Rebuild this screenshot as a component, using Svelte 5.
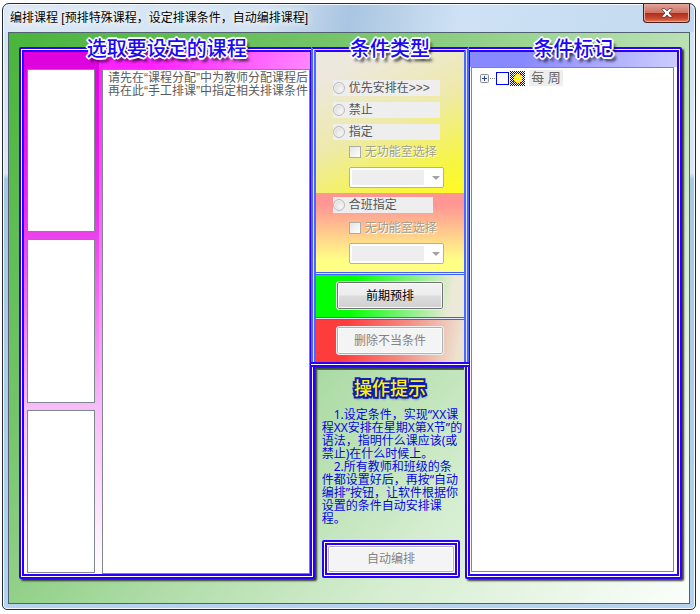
<script>
	let slots = [
		'课程列表',
		'教师列表',
		'班级列表'
	]

	let kinds = [
		'优先安排在>>>',
		'禁止',
		'指定'
	]

	let kind = $state('');
	let open = $state(false);

	const notice = '请先在“课程分配”中为教师分配课程后\n再在此“手工排课”中指定相关排课条件';

	const hints = [
		'　1.设定条件，实现“XX课',
		'程XX安排在星期X第X节”的',
		'语法，指明什么课应该(或',
		'禁止)在什么时候上。',
		'　2.所有教师和班级的条',
		'件都设置好后，再按“自动',
		'编排”按钮，让软件根据你',
		'设置的条件自动安排课',
		'程。'
	].join('\n');
</script>

{#snippet room()}
	<label class="check"><input type="checkbox" disabled /><span>无功能室选择</span></label>
	<div class="combo">
		<select disabled aria-label="功能室"><option></option></select>
		<svg viewBox="0 0 8 4" width="8" height="4"><path d="M0 0h8L4 4z" fill="#a3a3a3" /></svg>
	</div>
{/snippet}

<main class="window">
	<header>
		<h1>编排课程 [预排特殊课程，设定排课条件，自动编排课程]</h1>
		<button class="close" aria-label="关闭">
			<svg viewBox="0 0 12 10" width="12" height="10">
				<path d="M1 .7h3L6 3l2-2.300h3v1L8 5l3 3.300v1H8L6 7 4 9.300H1v-1L4 5 1 1.700z" fill="#fff" stroke="#54343a" stroke-width=".8" />
			</svg>
		</button>
	</header>

	<div class="client">
		<section class="panel courses">
			<h2>选取要设定的课程</h2>
			<div class="slots">
				{#each slots as slot}
					<div class="slot" aria-label={slot} role="listbox" tabindex="-1"></div>
				{/each}
			</div>
			<div class="list">
				<p>{notice}</p>
			</div>
		</section>

		<div class="middle">
			<section class="types">
				<h2>条件类型</h2>
				<div class="group single">
					{#each kinds as k}
						<label class="kind"><input type="radio" name="kind" value={k} bind:group={kind} disabled /><span>{k}</span></label>
					{/each}
					{@render room()}
				</div>
				<div class="group merged">
					<label class="kind short"><input type="radio" name="kind" value="合班指定" bind:group={kind} disabled /><span>合班指定</span></label>
					{@render room()}
				</div>
				<div class="action early"><button>前期预排</button></div>
				<div class="action remove"><button disabled>删除不当条件</button></div>
			</section>

			<section class="tips">
				<h3>操作提示</h3>
				<p>{hints}</p>
				<div class="auto"><button disabled>自动编排</button></div>
			</section>
		</div>

		<section class="panel marks">
			<h2>条件标记</h2>
			<div class="tree">
				<div class="node">
					<button class="expand" aria-label="展开" onclick={() => open = !open}>
						<svg viewBox="0 0 9 9" width="9" height="9">
							<rect x=".5" y=".5" width="8" height="8" rx="1" fill="#f4f4f4" stroke="#8d8d8d" />
							<path d="M2 4.500h5M4.500 2v5" stroke="#28459a" />
						</svg>
					</button>
					<i class="dots"></i>
					<input type="checkbox" aria-label="每周" />
					<svg class="sun" viewBox="0 0 15 15" width="15" height="15" shape-rendering="crispEdges">
						<defs>
							<pattern id="dither" width="2" height="2" patternUnits="userSpaceOnUse">
								<rect width="2" height="2" fill="#fff" />
								<path d="M0 0h1v1H0zM1 1h1v1H1z" fill="#0000a0" />
							</pattern>
						</defs>
						<rect width="15" height="15" fill="url(#dither)" />
						<path d="M5 4h1V3h4v1h1v1h1v5h-1v1h-1v1H6v-1H5v-1H4V5h1z" fill="#fff200" />
						<path d="M3 3h1v1H3zM10 3h1v1h-1zM12 6h1v1h-1zM3 10h2v1H3zM10 11h1v1h-1zM5 3h1v1H5z" fill="#f21c1c" />
						<path d="M6 5h1v1H6zM8 5h1v1H8zM7 7h1v1H7zM9 7h1v1H9zM6 9h1v1H6zM8 9h1v1H8z" fill="#fffbb0" />
					</svg>
					<span>每 周</span>
				</div>
			</div>
		</section>
	</div>
</main>

<style>
	:global(body) {
		margin: 0;
		background: #fff;
		font: 12px/16px "Liberation Sans", "Noto Sans CJK SC", sans-serif;
	}

	h1, h2, h3, p {
		margin: 0;
	}

	button, input, select {
		font: inherit;
		box-sizing: border-box;
		margin: 0;
		padding: 0;
	}

	.window {
		margin: 3px 4px 4px 2px;
		padding: 0 5px 5px;
		border: 1px solid #252c38;
		border-radius: 7px 7px 5px 5px;
		box-shadow: inset 0 0 0 1px #f4f9ff;
		background: linear-gradient(100deg, #dbe8f4 0, #d3e3f2 38%, #a9c5e1 50%, #bcd4ea 58%, #cfe2f5 66%, #c1d9ef 100%) 0 0 / 100% 28px no-repeat, linear-gradient(#d3e3f2, #dce8f4 28%, #a9c6e2 29%, #b5d2ee);
	}

	header {
		display: flex;
		justify-content: space-between;
		height: 28px;
	}

	h1 {
		padding-left: 2px;
		font-size: 12px;
		font-weight: 400;
		line-height: 28px;
		color: #000;
		text-shadow: 0 0 6px #fff, 0 0 8px #fff;
	}

	.close {
		display: flex;
		align-items: center;
		justify-content: center;
		width: 47px;
		height: 19px;
		border: 1px solid #4b1c1c;
		border-top: 0;
		border-radius: 0 0 4px 4px;
		box-shadow: inset 0 0 0 1px #e9a69a;
		background: linear-gradient(#dfa396, #cf7466 48%, #b22a17 50%, #c54a2f 80%, #dd7d60);
	}

	.client {
		display: grid;
		grid-template-columns: 296fr 150fr 217fr;
		padding: 14px 7px 24px 10px;
		border: 1px solid #52616f;
		background: linear-gradient(130deg, #49b43b 0, #74c468 28%, #b0dda9 54%, #d4edcf 72%, #fbfefb 100%);
	}

	h2 {
		position: absolute;
		top: -15px;
		left: 0;
		right: 0;
		text-align: center;
		font-size: 20px;
		font-weight: 500;
		line-height: 24px;
		color: #1b08f5;
		text-shadow: -1px -1px #fff, 1px -1px #fff, -1px 1px #fff, 1px 1px #fff, -2px 0 #fff, 2px 0 #fff, 0 -2px #fff, 0 2px #fff, 3px 4px 3px rgba(0, 0, 0, .9);
	}

	.panel {
		position: relative;
		display: flex;
		border: 5px double #2a00f8;
		border-radius: 2px;
		box-shadow: 2px 2px 2px rgba(0, 0, 0, .75);
	}

	.courses {
		background: #fff;
	}

	.slots {
		display: flex;
		flex-direction: column;
		gap: 7px;
		flex: 0 0 68px;
		padding: 17px 4px 1px 3px;
		background: linear-gradient(#dd00dd, #e92fe9 30%, #f7bdf7 68%, #fff);
	}

	.slot {
		flex: 1;
		border: 1px solid #7f8790;
		background: #fff;
	}

	.list {
		flex: 1;
		display: flex;
		padding: 17px 0 0 3px;
		background: linear-gradient(rgba(255, 255, 255, 0), #fff), linear-gradient(90deg, #ff1cff 25%, #ff83ff);
	}

	.list p {
		flex: 1;
		padding: 2px 0 0 5px;
		border: 1px solid #7f8790;
		background: #fff;
		color: #5c5c5c;
		line-height: 13px;
		white-space: pre;
	}

	.middle {
		display: flex;
		flex-direction: column;
		position: relative;
		z-index: 1;
	}

	.types {
		position: relative;
		margin: 0 -4px;
		border: 5px double #4a68ff;
		border-top-color: #2a00f8;
		border-bottom: 0;
		background: #dfe4ff;
	}

	.group {
		padding: 0 20px 8px 17px;
	}

	.single {
		padding-top: 28px;
		padding-bottom: 5px;
		background: linear-gradient(155deg, #ece8dd 15%, #eeeaa8 50%, #f7f63c 85%, #fffb25);
	}

	.merged {
		padding-top: 4px;
		background: linear-gradient(#ff9694 15%, #ffff86 85%);
	}

	.kind {
		display: flex;
		align-items: center;
		gap: 4px;
		height: 16px;
		margin-right: 4px;
		background: #eee;
		color: #555;
	}

	.kind + .kind {
		margin-top: 6px;
	}

	.short {
		margin-right: 11px;
		margin-bottom: 7px;
	}

	.kind input {
		appearance: none;
		width: 12px;
		height: 12px;
		border: 1px solid #bbb;
		border-radius: 50%;
		background: radial-gradient(circle at 65% 65%, #f6f6f6, #d4d4d4);
		box-shadow: inset 0 0 0 1px #f2f2f2;
	}

	.check {
		display: flex;
		align-items: center;
		gap: 4px;
		margin: 4px 0 7px 16px;
		color: #a0a090;
		text-shadow: 1px 1px #fff;
		white-space: nowrap;
	}

	.check input {
		appearance: none;
		width: 12px;
		height: 12px;
		border: 1px solid #acacac;
		background: linear-gradient(135deg, #e4e4e4, #fff);
	}

	.combo {
		position: relative;
		margin-left: 16px;
	}

	.combo select {
		appearance: none;
		display: block;
		width: 100%;
		height: 21px;
		border: 1px solid #b0b0b0;
		border-radius: 2px;
		opacity: 1;
		background: linear-gradient(#eee, #eee) 2px 2px / calc(100% - 21px) calc(100% - 4px) no-repeat #fff;
	}

	.combo svg {
		position: absolute;
		right: 4px;
		top: 9px;
	}

	.action {
		display: flex;
		justify-content: center;
		padding: 6px 0 7px;
		border-top: 3px double #3f62ff;
	}

	.action button {
		width: 108px;
		height: 29px;
		border: 1px solid #eee;
		border-radius: 3px;
		background: linear-gradient(#f3f3f3, #ececec 48%, #dcdcdc 52%, #cfcfcf);
		box-shadow: inset 0 0 0 1px #707070, inset 0 0 0 2px #fafafa;
		color: #000;
	}

	.early {
		background: linear-gradient(100deg, #00ff00 25%, #8df08a 65%, #ece9d8 90%) padding-box;
	}

	.remove {
		background: linear-gradient(100deg, #ff3c3c 20%, #f38e84 60%, #ece2d0 95%) padding-box;
	}

	.action button:disabled, .auto button:disabled {
		background: #f4f4f4;
		box-shadow: inset 0 0 0 1px #adb2b5, inset 0 0 0 2px #fcfcfc;
		color: #838383;
	}

	.tips {
		flex: 1;
		margin: 0 -4px;
		padding: 12px 7px 0;
		border-top: 5px double #2a00f8;
		background: linear-gradient(#fff, #fff) 0 0 / 100% 5px no-repeat border-box;
	}

	.tips::before {
		content: "";
		display: block;
		height: 3px;
		margin: -12px -2px 9px;
		background: linear-gradient(#23302a, #4f6b4c);
	}

	h3 {
		text-align: center;
		font-size: 18px;
		font-weight: 500;
		line-height: 20px;
		color: #fff200;
		-webkit-text-stroke: 4px #1020b8;
		paint-order: stroke fill;
		text-shadow: 1px 2px 3px #0018a0;
	}

	.tips p {
		padding: 9px 0 15px 4px;
		font-family: "Noto Sans", "Noto Sans CJK SC", sans-serif;
		line-height: 13px;
		color: #0505e4;
		white-space: pre;
	}

	.auto {
		margin: 0 2px 1px 4px;
		padding: 1px;
		border: 5px double #2a00f8;
		border-radius: 2px;
		background: #fff;
	}

	.auto button {
		display: block;
		width: 100%;
		height: 26px;
		border: 0;
		border-radius: 2px;
	}

	.marks {
		padding: 15px 3px 2px 1px;
		background: linear-gradient(100deg, #8888ff 25%, #ccccff) 0 0 / 100% 15px no-repeat padding-box, #fff;
	}

	.tree {
		flex: 1;
		border: 1px solid #7f8790;
		background: #fff;
	}

	.node {
		display: flex;
		align-items: center;
		padding: 2px 0 0 8px;
	}

	.expand {
		display: flex;
		border: 0;
		background: none;
	}

	.dots {
		width: 5px;
		margin: 0 1px;
		border-top: 1px dotted #808080;
	}

	.node input {
		appearance: none;
		width: 13px;
		height: 13px;
		border: 1px solid #0000ff;
		background: #fff;
	}

	.sun {
		margin-left: 1px;
	}

	.node span {
		margin-left: 4px;
		padding: 0 2px;
		background: #eee;
		font-size: 13px;
		color: #666;
		white-space: pre;
	}
</style>
